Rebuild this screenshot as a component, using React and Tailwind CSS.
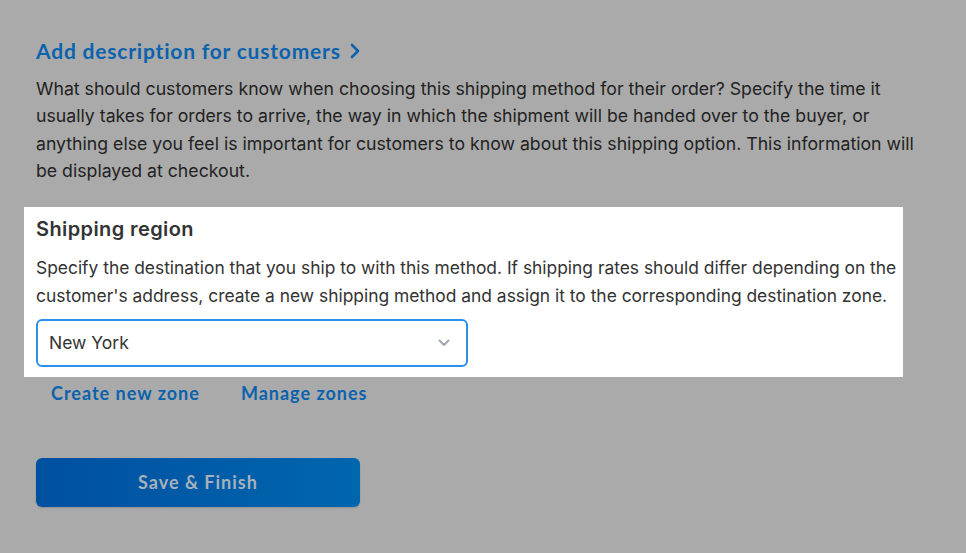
import React from "react";

export default function App() {
  const body = { fontFamily: "Inter, 'Noto Sans', sans-serif" };
  const brand = { fontFamily: "Lato, 'Open Sans', sans-serif" };
  const L = ({ children }) => <span className="block whitespace-nowrap">{children}</span>;
  return (
    <div className="w-[966px] h-[553px] bg-[#aaaaaa] overflow-hidden" style={body}>
      <div className="pl-[24px] pr-[63px]">
        <div className="pl-[12px] pt-[37px]">
          <a className="flex items-center gap-[9px] text-[21px] leading-[28px] font-bold tracking-[0.8px] text-[#0b62ad]" style={brand}>
            Add description for customers
            <svg width="10" height="16" viewBox="0 0 10 16" fill="none">
              <path d="M2 2l6 6-6 6" stroke="#0b62ad" strokeWidth="2.6" strokeLinecap="round" strokeLinejoin="round" />
            </svg>
          </a>
          <p className="mt-[10px] text-[17.7px] leading-[27.4px] text-[#222222]">
            <L>What should customers know when choosing this shipping method for their order? Specify the time it</L>
            <L>usually takes for orders to arrive, the way in which the shipment will be handed over to the buyer, or</L>
            <L>anything else you feel is important for customers to know about this shipping option. This information will</L>
            <L>be displayed at checkout.</L>
          </p>
        </div>
        <div className="mt-[22px] bg-white pl-[12px] pt-[8px] pb-[10px]">
          <h2 className="text-[20px] leading-[28px] font-semibold tracking-[0.4px] text-[#333333]">Shipping region</h2>
          <p className="mt-[11px] text-[17.4px] leading-[28px] text-[#333333]">
            <L>Specify the destination that you ship to with this method. If shipping rates should differ depending on the</L>
            <L>customer's address, create a new shipping method and assign it to the corresponding destination zone.</L>
          </p>
          <div className="mt-[9px] w-[432px] h-[48px] rounded-[6px] border-2 border-[#2a90ec] flex items-center justify-between pl-[11px] pr-[16px]">
            <span className="text-[17.5px] text-[#333333]">New York</span>
            <svg width="12" height="8" viewBox="0 0 12 8" fill="none">
              <path d="M1.5 1.5L6 6l4.5-4.5" stroke="#a0a8b0" strokeWidth="2" strokeLinecap="round" strokeLinejoin="round" />
            </svg>
          </div>
        </div>
        <div className="px-[12px]">
          <div className="mt-[4px] pl-[15px] flex gap-[41px] text-[18px] leading-[24px] font-bold tracking-[1px] text-[#0b62ad]" style={brand}>
            <a>Create new zone</a>
            <a>Manage zones</a>
          </div>
          <button className="mt-[53px] w-[324px] h-[49px] rounded-[6px] bg-gradient-to-r from-[#0050a0] to-[#0066ae] text-[18px] font-bold tracking-[1px] text-[#a7b1bc] shadow-[0_1px_2px_rgba(0,0,0,0.15)]" style={brand}>
            Save &amp; Finish
          </button>
        </div>
      </div>
    </div>
  );
}
